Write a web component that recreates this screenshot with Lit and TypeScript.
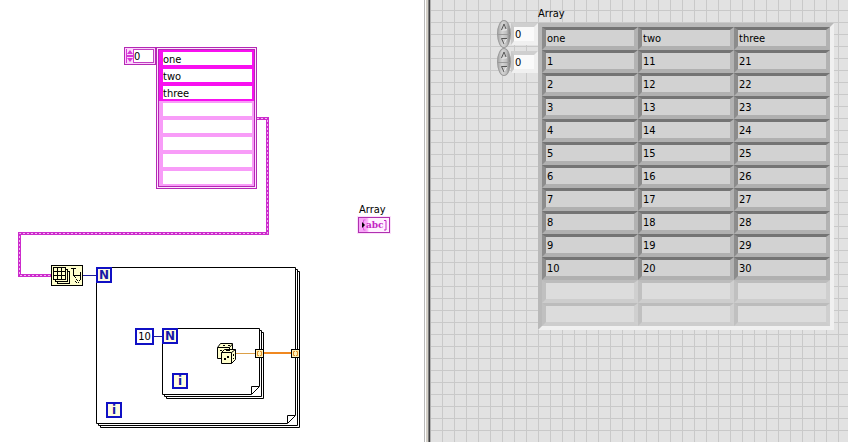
import { LitElement, html, svg, css } from "lit";
import { customElement, property } from "lit/decorators.js";

const FONT = css`"DejaVu Sans Condensed", "DejaVu Sans", sans-serif`;

/** Block diagram: a free canvas of nodes joined by wires. */
@customElement("block-diagram")
class BlockDiagram extends LitElement {
  static styles = css`
    :host { display: block; position: relative; background: #fff; font: 11px/13px ${FONT}; color: #000; overflow: hidden; }
    * { box-sizing: border-box; }
    input { border: 0; padding: 0; margin: 0; background: #fff; font: inherit; color: inherit; min-width: 0; border-radius: 0; outline: 0; display: block; }
    .wires { position: absolute; left: 0; top: 0; width: 424px; height: 442px; display: block; }
    .node { position: absolute; }
    .array-constant { left: 124px; top: 47px; display: flex; align-items: flex-start; }
    .index { display: flex; width: 32px; height: 18px; border: 1px solid #b428b4; background: #fbd0fb; padding: 1px; }
    .index svg { display: block; flex: none; }
    .index input { width: 20px; height: 14px; border: 1px solid #c040c0; border-left: 0; padding-top: 1px; }
    .elements { width: 101px; border: 1px solid #b428b4; padding: 1px; background: #fde4fd; }
    .list { border: 1px solid #b428b4; }
    .element { padding: 2px 2px 2px 4px; background: #f810f0; }
    .element.unset { background: #f89cf8; }
    .element input { width: 100%; height: 13px; padding-top: 1px; }
    .indicator { left: 358px; top: 203px; }
    .indicator label { display: block; height: 14px; line-height: 14px; padding-left: 1px; }
    .terminal { display: flex; align-items: center; width: 32px; height: 16px; border: 1px solid #b030b0; background: linear-gradient(90deg, #f8a8f8 8px, #fff0ff 10px); font: bold 10px/12px "DejaVu Serif Condensed", "DejaVu Serif", serif; color: #c424c4; outline: 1px solid #fbe0fb; }
    .terminal svg { display: block; flex: none; }
    .term { width: 16px; height: 16px; border: 2px solid #1010c4; background: #fffce0; color: #1818a8; text-align: center; font: bold 12px/12px "DejaVu Sans", sans-serif; }
    .n-outer { left: 96px; top: 267px; }
    .n-inner { left: 162px; top: 328px; }
    .i-outer { left: 106px; top: 402px; }
    .i-inner { left: 172px; top: 373px; }
    .count { left: 135px; top: 328px; width: 19px; height: 17px; border: 2px solid #1010c4; text-align: center; }
  `;

  private frame(x: number, y: number, r: number, b: number) {
    return svg`
      <g fill="none" stroke="#000">
        <path d="M${x + 4.5} ${b + 3}V${b + 4.5}H${r + 4.5}V${y + 4.5}H${r + 3}"/>
        <path d="M${x + 2.5} ${b + 1}V${b + 2.5}H${r + 2.5}V${y + 2.5}H${r + 1}"/>
        <path fill="#fff" d="M${x + 0.5} ${y + 0.5}H${r + 0.5}V${b - 7.5}H${r - 7.5}V${b + 0.5}H${x + 0.5}Z"/>
        <path d="M${r - 7} ${b}L${r} ${b - 7}"/>
      </g>`;
  }

  private tunnel(x: number) {
    return svg`
      <rect x="${x + 0.5}" y="349.5" width="8" height="8" fill="#fff3b8" stroke="#000"/>
      <path d="M${x + 4} 351.5H${x + 2.5}V355.5H${x + 4}M${x + 5} 351.5H${x + 6.5}V355.5H${x + 5}" fill="none" stroke="#e09030"/>`;
  }

  private row(value: string, i: number) {
    return html`<div class="element ${value ? "" : "unset"}">
      <input type="text" .value=${value} aria-label="Element ${i}">
    </div>`;
  }

  render() {
    const chain = "M257 118.5H267.5V233.5H19.5V275.5H51";
    return html`
      <svg class="wires" viewBox="0 0 424 442" aria-hidden="true">
        ${this.frame(96, 267, 295, 423)}
        ${this.frame(162, 328, 259, 394)}
        <g fill="none">
          <path d="${chain}" stroke="#cc2ccc" stroke-width="3"/>
          <path d="${chain}" stroke="#f4b4f4" stroke-dasharray="2 2"/>
          <path d="M83 275.5H96M154 336.5H162" stroke="#1c1c98"/>
          <path d="M235 353.5H256" stroke="#dca048"/>
          <path d="M263 353H292" stroke="#f08820" stroke-width="2"/>
        </g>
        ${this.tunnel(255)}${this.tunnel(291)}

        <g transform="translate(51 265)" fill="none" stroke="#000">
          <rect x=".5" y=".5" width="31" height="20" fill="#ffffcc"/>
          <rect x="6.5" y="6.5" width="12" height="12" fill="#ffffcc"/>
          <rect x="4.5" y="4.5" width="12" height="12" fill="#ffffcc"/>
          <rect x="2.5" y="2.5" width="12" height="12" fill="#ffffcc"/>
          <path d="M6.5 2V15M10.5 2V15M2 6.5H15M2 10.5H15"/>
          <path d="M20 3.5H25M22.5 3V11M22 10.5H30M29.5 7V14"/>
          <path d="M23 11h1v1h-1zM24 12h1v1h-1zM25 14h1v1h-1zM26 15h1v1h-1zM27 17h1v1h-1zM28 15h1v1h-1zM29 14h1v1h-1zM25 17h1v1h-1zM24 16h1v1h-1z" fill="#000" stroke="none"/>
        </g>

        <g transform="translate(217 343)" fill="#ffffcc" stroke="#000">
          <path d="M.5 4.5L3.5 .5H15.5V10L12.5 15.5H.5Z"/>
          <path d="M.5 4.5H12.5V15M12.5 4.5L15.5 1" fill="none"/>
          <path d="M4.5 20.500V9.500L7.500 6.500H18.500V16.500L14.500 20.500Z"/>
          <path d="M4.500 9.500H14.500V20.500M14.500 9.500L18.500 6.500" fill="none"/>
          <path d="M6 2h2v1H6zM11 2h2v1h-2zM3 7h2v1H3zM9 7h2v1H9zM11 7h2v1h-2zM10 13h2v2h-2zM7 15h2v2H7zM16 11h1v2h-1zM16 15h1v1h-1z" fill="#000" stroke="none"/>
        </g>
      </svg>

      <div class="node array-constant">
        <div class="index">
          <svg width="8" height="14" viewBox="0 0 8 14" aria-hidden="true">
            <rect width="8" height="14" fill="#fbd8fb"/>
            <path d="M4 1L7 5H1ZM4 13L7 9H1ZM1 6H7V8H1Z" fill="#d838d8"/>
            <path d="M.5 0V14M7.500 0V14" stroke="#d838d8"/>
          </svg>
          <input type="text" value="0" aria-label="Array constant index">
        </div>
        <div class="elements"><div class="list">
          ${["one", "two", "three", "", "", "", "", ""].map((v, i) => this.row(v, i))}
        </div></div>
      </div>

      <div class="node indicator">
        <label id="ind">Array</label>
        <div class="terminal" aria-labelledby="ind">
          <svg width="7" height="14" viewBox="0 0 7 14" aria-hidden="true">
            <path d="M6.500 2H4.500V12H6.500" fill="none" stroke="#e060e0"/>
            <path d="M3 4V10L6 7Z" fill="#000"/>
          </svg>
          <span>abc</span>
          <svg width="3" height="14" viewBox="0 0 3 14" aria-hidden="true">
            <path d="M0 2.500H2V12H0" fill="none" stroke="#c424c4"/>
          </svg>
        </div>
      </div>

      <div class="node term n-outer">N</div>
      <div class="node term n-inner">N</div>
      <div class="node term i-outer">i</div>
      <div class="node term i-inner">i</div>
      <input class="node count" type="text" value="10" aria-label="Loop count">
    `;
  }
}

/** Index control: an increment / decrement pair beside a number. */
@customElement("index-control")
class IndexControl extends LitElement {
  @property() label = "";

  static styles = css`
    :host { display: flex; align-items: center; height: 28px; font: 11px/14px ${FONT}; }
    * { box-sizing: border-box; }
    .spin { display: flex; flex-direction: column; width: 14px; height: 28px; border-radius: 50%; border: 1px solid #999; background: linear-gradient(90deg, #aaa, #d4d4d4 35%, #c0c0c0 70%, #808080); overflow: hidden; }
    button { flex: 1; display: flex; align-items: center; justify-content: center; border: 0; padding: 0; background: none; }
    button + button { border-top: 1px solid #999; }
    svg { display: block; }
    input { width: 27px; height: 22px; border: 3px solid; border-width: 4px 4px 4px 3px; border-color: #cfcfcf #f0f0f0 #f0f0f0 #c8c8c8; background: #fafafa; padding: 0 0 0 1px; margin: 0; font: inherit; color: #000; border-radius: 0; outline: 0; }
  `;

  render() {
    return html`
      <div class="spin">
        <button type="button" aria-label="Increment ${this.label}">
          <svg width="8" height="8" viewBox="0 0 8 8"><path d="M4 1L6.500 7H2" stroke="#eee" fill="none"/><path d="M1.500 7L4 1L6 6" stroke="#555" fill="none"/></svg>
        </button>
        <button type="button" aria-label="Decrement ${this.label}">
          <svg width="8" height="8" viewBox="0 0 8 8"><path d="M4 7L6.500 2" stroke="#eee"/><path d="M7 1.500H1.500L4 7" stroke="#555" fill="none"/></svg>
        </button>
      </div>
      <input type="text" value="0" aria-label=${this.label}>
    `;
  }
}

/** Front panel: the two-dimensional string array on a grid. */
@customElement("front-panel")
class FrontPanel extends LitElement {
  static styles = css`
    :host {
      display: block; font: 11px/14px ${FONT}; color: #000;
      background-color: #e2e2e2;
      background-image: linear-gradient(90deg, transparent 11px, #c9c9c9 11px), linear-gradient(transparent 11px, #c9c9c9 11px);
      background-size: 12px 12px;
      background-position: 0 -1px;
    }
    * { box-sizing: border-box; }
    .control { display: flex; align-items: flex-start; padding: 6px 14px 16px 66px; }
    .indexes { padding-top: 14px; width: 41px; flex: none; }
    .label { height: 17px; line-height: 15px; }
    table { border-collapse: separate; border-spacing: 0; table-layout: fixed; width: 296px; border: 4px solid; border-color: #b9b9b9 #f0f0f0 #f0f0f0 #b9b9b9; }
    td { height: 23px; padding: 1px 0 0 1px; border-style: solid; border-width: 3px 4px 4px 4px; border-color: #747474 #b2b2b2 #b0b0b0 #8c8c8c; background: #d2d2d2; vertical-align: middle; }
    .unset td { border-color: #bcbcbc #cfcfcf #cdcdcd #c0c0c0; background: #dcdcdc; }
  `;

  render() {
    const rows: string[][] = [["one", "two", "three"]];
    for (let i = 1; i <= 10; i++) rows.push([`${i}`, `${i + 10}`, `${i + 20}`]);
    rows.push(["", "", ""], ["", "", ""]);
    return html`
      <div class="control">
        <div class="indexes">
          <index-control label="Row index"></index-control>
          <index-control label="Column index"></index-control>
        </div>
        <div>
          <div class="label" id="name">Array</div>
          <table aria-labelledby="name">
            <tbody>
              ${rows.map((r) => html`<tr class=${r[0] ? "" : "unset"}>${r.map((c) => html`<td>${c}</td>`)}</tr>`)}
            </tbody>
          </table>
        </div>
      </div>
    `;
  }
}

@customElement("app-root")
class AppRoot extends LitElement {
  static styles = css`
    :host { display: flex; min-height: 100vh; }
    block-diagram { flex: 424 1 0; }
    .divider { flex: none; width: 7px; background: linear-gradient(90deg, #b8b8b8 1px, #fff 1px 2px, #d4d0c8 2px 4px, #808080 4px 5px, #404040 5px 6px, #b0b0b0 6px); }
    front-panel { flex: 417 1 0; min-width: 0; }
  `;

  render() {
    return html`
      <block-diagram></block-diagram>
      <div class="divider"></div>
      <front-panel></front-panel>
    `;
  }
}
